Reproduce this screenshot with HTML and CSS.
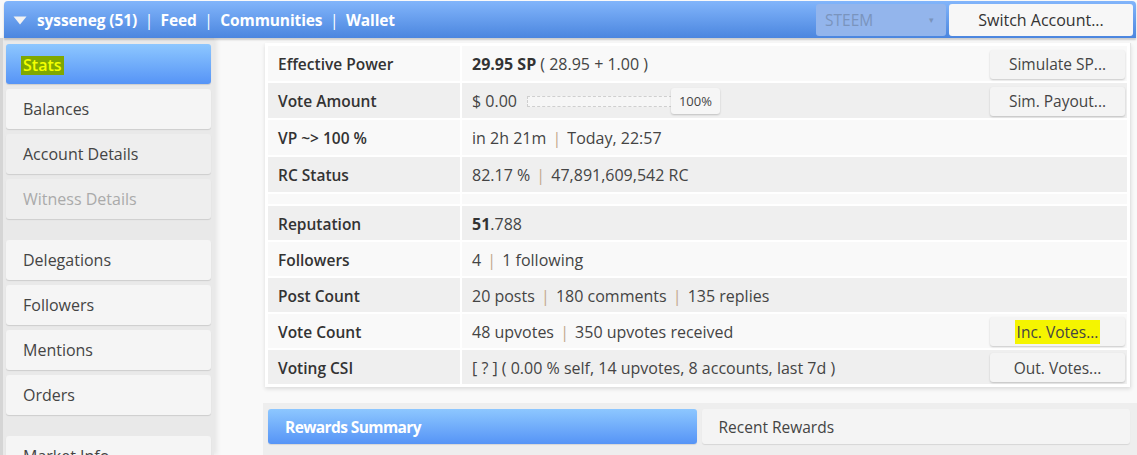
FILE: index.html
```html
<!DOCTYPE html>
<html>
<head>
<meta charset="utf-8">
<link rel="stylesheet" href="styles.css">
</head>
<body>
<div class="topbar">
  <div class="nav">
    <svg class="caret" width="14" height="9" viewBox="0 0 14 9"><path d="M0.5 0.5 H13.5 L7 8.5 Z" fill="#f2f2f2"/></svg>
    <span>sysseneg (51)</span><span class="sep">|</span><span>Feed</span><span class="sep">|</span><span>Communities</span><span class="sep">|</span><span>Wallet</span>
  </div>
  <div class="tools">
    <div class="select"><span>STEEM</span><span class="arrow">▾</span></div>
    <div class="switch">Switch Account...</div>
  </div>
</div>
<div class="layout">
  <aside class="sidebar">
    <div class="item active"><span class="mark">Stats</span></div>
    <div class="item">Balances</div>
    <div class="item alt">Account Details</div>
    <div class="item alt disabled">Witness Details</div>
    <div class="group-gap"></div>
    <div class="item">Delegations</div>
    <div class="item">Followers</div>
    <div class="item">Mentions</div>
    <div class="item">Orders</div>
    <div class="group-gap"></div>
    <div class="item">Market Info</div>
  </aside>
  <main class="main">
    <div class="card">
      <div class="row light tall">
        <div class="label">Effective Power</div>
        <div class="value"><span><b>29.95 SP</b> ( 28.95 + 1.00 )</span><div class="btn">Simulate SP...</div></div>
      </div>
      <div class="row dark tall">
        <div class="label">Vote Amount</div>
        <div class="value"><span class="vote"><span>$ 0.00</span><span class="track"></span><span class="pct">100%</span></span><div class="btn">Sim. Payout...</div></div>
      </div>
      <div class="row light tall">
        <div class="label">VP ~&gt; 100 %</div>
        <div class="value"><span>in 2h 21m <i>|</i> Today, 22:57</span></div>
      </div>
      <div class="row dark tall">
        <div class="label">RC Status</div>
        <div class="value"><span>82.17 % <i>|</i> 47,891,609,542 RC</span></div>
      </div>
      <div class="row light spacer">
        <div class="label"></div>
        <div class="value"></div>
      </div>
      <div class="row dark">
        <div class="label">Reputation</div>
        <div class="value"><span><b>51</b>.788</span></div>
      </div>
      <div class="row light">
        <div class="label">Followers</div>
        <div class="value"><span>4 <i>|</i> 1 following</span></div>
      </div>
      <div class="row dark">
        <div class="label">Post Count</div>
        <div class="value"><span>20 posts <i>|</i> 180 comments <i>|</i> 135 replies</span></div>
      </div>
      <div class="row light">
        <div class="label">Vote Count</div>
        <div class="value"><span>48 upvotes <i>|</i> 350 upvotes received</span><div class="btn"><span class="hl">Inc. Votes...</span></div></div>
      </div>
      <div class="row dark">
        <div class="label">Voting CSI</div>
        <div class="value"><span>[ ? ] ( 0.00 % self, 14 upvotes, 8 accounts, last 7d )</span><div class="btn">Out. Votes...</div></div>
      </div>
    </div>
    <div class="tabs">
      <div class="tab active">Rewards Summary</div>
      <div class="tab">Recent Rewards</div>
    </div>
  </main>
</div>
</body>
</html>
```
FILE: styles.css
```css
html, body {
  margin: 0;
  padding: 0;
  width: 1137px;
  height: 455px;
  overflow: hidden;
  background: #f9f9f9;
  font-family: "Open Sans", "Noto Sans", sans-serif;
  color: #444;
}

.topbar {
  height: 37px;
  margin: 1px 1px 0 4px;
  border-radius: 4px 4px 0 0;
  background: linear-gradient(#82b5fb, #4b86df);
  display: flex;
  align-items: center;
  justify-content: space-between;
  box-shadow: 0 2px 2px rgba(0, 0, 0, 0.18);
  position: relative;
  z-index: 2;
}

.nav {
  display: flex;
  align-items: center;
  color: #fff;
  font-weight: 700;
  font-size: 15.5px;
  padding-left: 9px;
  letter-spacing: -0.1px;
}

.caret {
  margin-right: 10px;
  margin-top: 1px;
}

.sep {
  margin: 0 7.5px;
  font-weight: 400;
}

.tools {
  display: flex;
  gap: 3px;
  padding-right: 3px;
}

.select {
  width: 130px;
  height: 32px;
  box-sizing: border-box;
  background: #93b5ec;
  border-radius: 3px;
  display: flex;
  align-items: center;
  justify-content: space-between;
  padding: 0 12px 0 9px;
  color: #7a94bd;
  font-size: 15.5px;
}

.select .arrow {
  font-size: 9px;
  color: #7a94bd;
}

.switch {
  width: 184px;
  height: 32px;
  background: #f7f7f7;
  border-radius: 3px;
  display: flex;
  align-items: center;
  justify-content: center;
  font-size: 16px;
  color: #333;
}

.layout {
  display: flex;
  height: 417px;
}

.sidebar {
  width: 205px;
  flex: none;
  background: #e9e9e9;
  border-left: 3px solid #d5d5d5;
  padding: 6px 3px 0 3px;
  box-shadow: 3px 0 5px rgba(0, 0, 0, 0.08);
  display: flex;
  flex-direction: column;
  gap: 5px;
  position: relative;
  z-index: 1;
}

.item {
  height: 40px;
  flex: none;
  box-sizing: border-box;
  border-radius: 3px;
  background: #f5f5f5;
  box-shadow: 0 1px 1px rgba(0, 0, 0, 0.12);
  display: flex;
  align-items: center;
  padding-left: 17px;
  font-size: 16px;
  color: #444;
}

.item.alt {
  background: #eeeeee;
}

.item.disabled {
  color: #aaa;
}

.item.active {
  background: linear-gradient(#8dc7ff, #5694f6);
  color: #fff;
}

.mark {
  background: #80a800;
  color: #f4ff00;
  padding: 0 2px 0 2px;
  margin-left: -2px;
  margin-top: 2px;
  line-height: 19px;
  font-weight: 600;
}

.group-gap {
  height: 11px;
  flex: none;
}

.main {
  flex: 1;
  padding: 5px 4px 0 51px;
  display: flex;
  flex-direction: column;
}

.card {
  background: #fff;
  padding: 3px;
  display: flex;
  flex-direction: column;
  gap: 2px;
  box-shadow: 0 2px 4px rgba(0, 0, 0, 0.12);
  border-right: 1px solid #e4e4e4;
  margin-right: 2px;
}

.row {
  display: flex;
  gap: 2px;
  height: 34px;
}

.row.tall {
  height: 35px;
}

.row.spacer {
  height: 10px;
}

.row.light > div {
  background: #f9f9f9;
}

.row.dark > div {
  background: #efefef;
}

.label {
  width: 182px;
  flex: none;
  padding-left: 10px;
  padding-top: 1px;
  display: flex;
  align-items: center;
  font-size: 15.5px;
  font-weight: 600;
  color: #333;
}

.value {
  flex: 1;
  display: flex;
  align-items: center;
  justify-content: space-between;
  padding: 1px 2px 0 10px;
  font-size: 16px;
  color: #444;
}

.value b {
  font-weight: 700;
  color: #333;
}

.value i {
  font-style: normal;
  color: #c3a88e;
  margin: 0 2px;
}

.vote {
  display: flex;
  align-items: center;
}

.track {
  width: 143px;
  height: 9px;
  margin-left: 10px;
  border: 1px dashed #cfcfcf;
  background: #f6f6f6;
}

.pct {
  width: 49px;
  height: 26px;
  box-sizing: border-box;
  display: flex;
  align-items: center;
  justify-content: center;
  font-size: 13px;
  background: #f6f6f6;
  border-radius: 3px;
  box-shadow: 0 1px 2px rgba(0, 0, 0, 0.2);
  margin-left: -1px;
}

.btn {
  width: 135px;
  height: 29px;
  box-sizing: border-box;
  display: flex;
  align-items: center;
  justify-content: center;
  background: #f4f4f4;
  border-radius: 3px;
  box-shadow: 0 1px 2px rgba(0, 0, 0, 0.2);
  font-size: 15.5px;
  color: #444;
}

.hl {
  background: #f5f500;
  padding: 1px 2px;
}

.tabs {
  margin-top: 16px;
  margin-left: -2px;
  margin-right: -4px;
  background: #eeeeee;
  padding: 6px 7px 0 5px;
  display: flex;
  gap: 5px;
  flex: 1;
}

.tab {
  flex: 1;
  height: 35px;
  border-radius: 3px;
  background: #f4f4f4;
  display: flex;
  align-items: center;
  padding-left: 17px;
  font-size: 15.5px;
  color: #444;
  box-shadow: 0 1px 1px rgba(0, 0, 0, 0.1);
}

.tab.active {
  background: linear-gradient(#8dc7ff, #5694f6);
  color: #fff;
  font-weight: 700;
  letter-spacing: -0.6px;
}
```
